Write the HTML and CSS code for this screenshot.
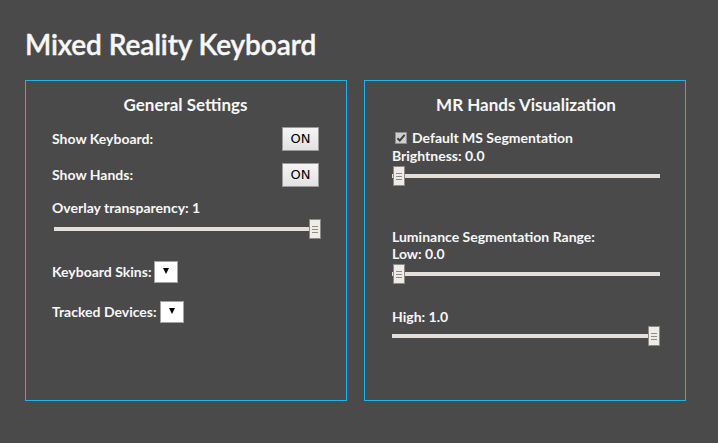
FILE: index.html
```html
<!DOCTYPE html>
<html>
<head>
<meta charset="utf-8">
<link rel="stylesheet" href="styles.css">
</head>
<body>
<h1 class="title">Mixed Reality Keyboard</h1>
<div class="panels">
  <section class="panel">
    <h2 class="panel-title">General Settings</h2>
    <div class="row row-first">
      <span class="label">Show Keyboard:</span>
      <button class="toggle">ON</button>
    </div>
    <div class="row row-next">
      <span class="label">Show Hands:</span>
      <button class="toggle">ON</button>
    </div>
    <div class="label overlay-label">Overlay transparency: 1</div>
    <div class="slider slider-left">
      <div class="track track-short"></div>
      <div class="thumb thumb-end"><i></i><i></i><i></i></div>
    </div>
    <div class="select-row skins-row">
      <span class="label">Keyboard Skins:</span>
      <span class="select"><b class="arrow"></b></span>
    </div>
    <div class="select-row devices-row">
      <span class="label">Tracked Devices:</span>
      <span class="select"><b class="arrow"></b></span>
    </div>
  </section>
  <section class="panel panel-right">
    <h2 class="panel-title">MR Hands Visualization</h2>
    <div class="check-row">
      <svg class="checkbox" width="12" height="12" viewBox="0 0 12 12">
        <rect x="0.5" y="0.5" width="11" height="11" fill="#cfcfcf" stroke="#8e8e8e"/>
        <path d="M2.5 6.2 L4.8 8.6 L9.6 2.8" fill="none" stroke="#3c3c3c" stroke-width="2"/>
      </svg>
      <span class="label">Default MS Segmentation</span>
    </div>
    <div class="label brightness-label">Brightness: 0.0</div>
    <div class="slider slider-right s-bright">
      <div class="track"></div>
      <div class="thumb thumb-start"><i></i><i></i><i></i></div>
    </div>
    <div class="label lum-label">Luminance Segmentation Range:</div>
    <div class="label low-label">Low: 0.0</div>
    <div class="slider slider-right s-low">
      <div class="track"></div>
      <div class="thumb thumb-start"><i></i><i></i><i></i></div>
    </div>
    <div class="label high-label">High: 1.0</div>
    <div class="slider slider-right s-high">
      <div class="track"></div>
      <div class="thumb thumb-end"><i></i><i></i><i></i></div>
    </div>
  </section>
</div>
</body>
</html>
```
FILE: styles.css
```css
* { box-sizing: border-box; }
html, body {
  margin: 0;
  padding: 0;
  background: #4a4a4a;
  width: 718px;
  height: 443px;
  overflow: hidden;
  font-family: Lato, "Open Sans", sans-serif;
  color: #f7f7f7;
}
.title {
  margin: 0;
  padding: 27px 0 0 25px;
  height: 80px;
  font-size: 28px;
  line-height: 34px;
  font-weight: 600;
  letter-spacing: -0.1px;
  -webkit-text-stroke: 0.4px #f7f7f7;
}
.panels {
  display: flex;
  gap: 17px;
  padding-left: 25px;
}
.panel {
  width: 322px;
  height: 321px;
  border: 1px solid #1eb4ee;
  padding: 14px 27px 0 26px;
  display: flex;
  flex-direction: column;
}
.panel-right {
  padding-left: 27px;
  padding-right: 25px;
}
.panel-title {
  margin: 0;
  text-align: center;
  font-size: 17px;
  line-height: 20px;
  font-weight: 700;
}
.label {
  font-size: 14px;
  line-height: 16px;
  font-weight: 700;
}
.row {
  display: flex;
  justify-content: space-between;
  align-items: center;
  height: 24px;
}
.row-first { margin-top: 12px; }
.row-next { margin-top: 12px; }
.toggle {
  width: 37px;
  height: 24px;
  padding: 0;
  border: 1px solid #9a9a9a;
  background: linear-gradient(#f4f4f4, #e2e2e2);
  color: #000;
  font-family: "DejaVu Sans", sans-serif;
  font-size: 13px;
  line-height: 22px;
  border-radius: 0;
}
.overlay-label { margin-top: 13px; }
.slider {
  position: relative;
  height: 20px;
}
.slider-left {
  margin-top: 3px;
  margin-left: 2px;
  width: 267px;
}
.track {
  position: absolute;
  left: 0;
  right: 0;
  top: 8px;
  height: 4px;
  background: #e4dfd9;
}
.track-short { right: 8px; }
.thumb {
  position: absolute;
  top: 0;
  width: 12px;
  height: 20px;
  background: #efebe7;
  border: 1px solid #8c8a87;
  display: flex;
  flex-direction: column;
  justify-content: center;
  align-items: center;
  gap: 2px;
}
.thumb i {
  display: block;
  width: 6px;
  height: 1px;
  background: #8f8c88;
}
.thumb-end { right: 0; }
.thumb-start { left: 1px; }
.select-row {
  display: flex;
  align-items: center;
  gap: 3px;
}
.skins-row { margin-top: 22px; }
.devices-row { margin-top: 18px; }
.select {
  width: 24px;
  height: 22px;
  background: #fff;
  border: 1px solid #a3a3a3;
  display: flex;
  justify-content: center;
  padding-top: 6px;
}
.arrow {
  width: 0;
  height: 0;
  border-left: 3px solid transparent;
  border-right: 3px solid transparent;
  border-top: 6px solid #000;
}
.check-row {
  margin-top: 15px;
  display: flex;
  align-items: center;
  gap: 5px;
  padding-left: 3px;
}
.brightness-label { margin-top: 2px; }
.slider-right { width: 268px; }
.s-bright { margin-top: 2px; }
.lum-label { margin-top: 43px; }
.low-label { margin-top: 1px; }
.s-low { margin-top: 2px; }
.high-label { margin-top: 25px; }
.s-high { margin-top: 1px; }
```
